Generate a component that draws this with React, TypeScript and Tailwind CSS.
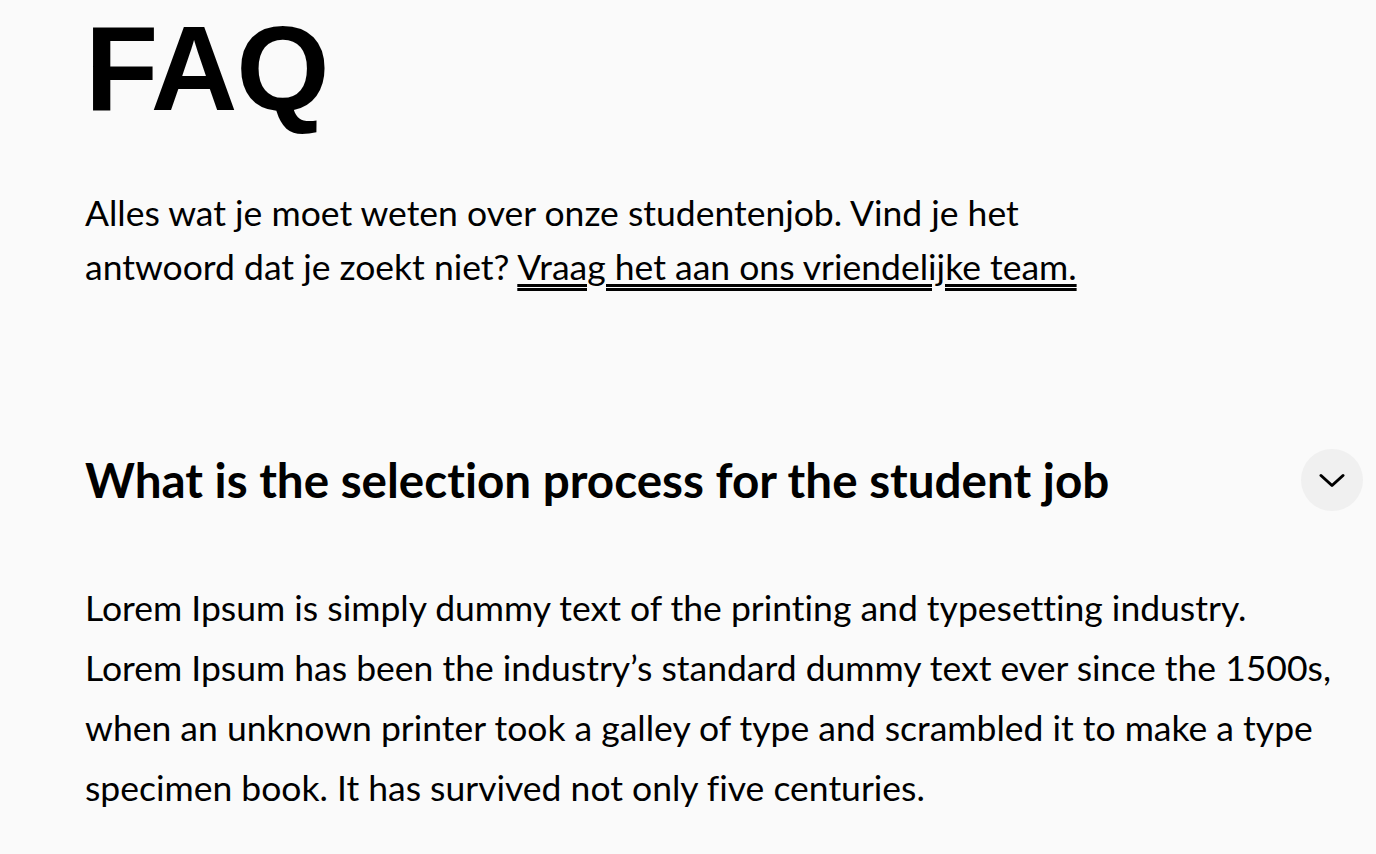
export default function App() {
  return (
    <div
      className="min-h-screen bg-[#fafafa] text-black [font-variant-ligatures:no-common-ligatures]"
      style={{ fontFamily: 'Lato, "Noto Sans", sans-serif' }}
    >
      <div className="pl-[85px] pr-[13px] pt-[8px]">
        <h1 className="text-[120px] font-bold leading-none tracking-[-1px] [font-family:'Liberation_Sans',Arial,sans-serif]">
          FAQ
        </h1>

        <p className="mt-[58px] max-w-[1000px] text-[35.5px] leading-[54px]">
          Alles wat je moet weten over onze studentenjob. Vind je het antwoord dat je zoekt niet?{' '}
          <a href="#" className="underline decoration-double decoration-[3px] underline-offset-[4px]">
            Vraag het aan ons vriendelijke team.
          </a>
        </p>

        <div className="mt-[154px] flex items-center justify-between">
          <h2 className="text-[47.6px] font-bold leading-[64px]">What is the selection process for the student job</h2>
          <button className="flex h-[62px] w-[62px] shrink-0 items-center justify-center rounded-full bg-[#f0f0f0]">
            <svg width="26" height="15" viewBox="0 0 26 15" fill="none">
              <path d="M2 2.5 L13 12.5 L24 2.5" stroke="#000" strokeWidth="3" strokeLinecap="round" strokeLinejoin="round" />
            </svg>
          </button>
        </div>

        <p className="mt-[66px] pr-[20px] text-[35.5px] leading-[60px]">
          Lorem Ipsum is simply dummy text of the printing and typesetting industry. Lorem Ipsum has been the
          industry’s standard dummy text ever since the 1500s, when an unknown printer took a galley of type and
          scrambled it to make a type specimen book. It has survived not only five centuries.
        </p>
      </div>
    </div>
  )
}
